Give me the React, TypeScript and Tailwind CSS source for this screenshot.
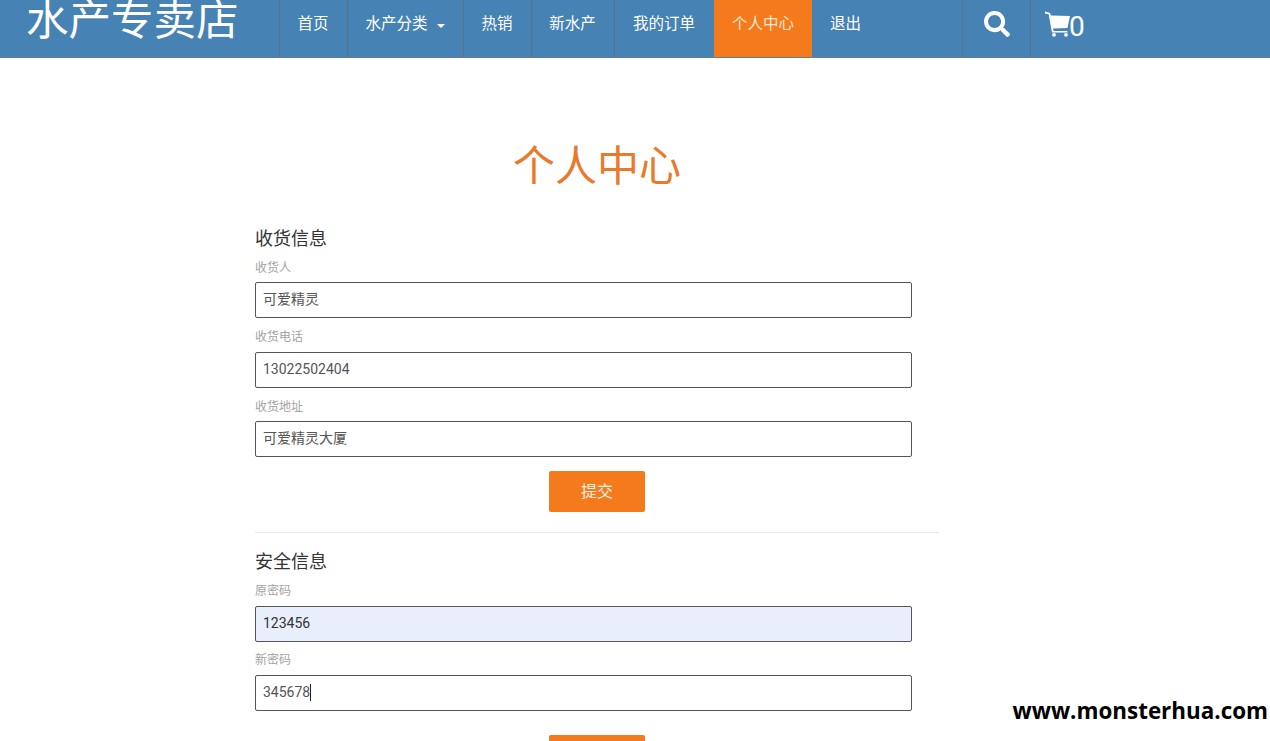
import React from "react";
import { FaSearch } from "react-icons/fa";

const cjk = "font-['Roboto','Noto_Sans_CJK_SC',sans-serif]";

function NavItem({ label, w, active, caret, plain }: { label: string; w: string; active?: boolean; caret?: boolean; plain?: boolean }) {
  const tone = active
    ? "bg-[#f47a1c] text-[#fbe6d0] justify-center"
    : plain
      ? "text-white pl-[18px]"
      : "text-white border-l border-[#5a7186] justify-center pr-[1px]";
  return (
    <div className={`${w} h-full flex items-center text-[15.5px] pb-[8px] ${tone}`}>
      <span>{label}</span>
      {caret && <span className="ml-[9px] mt-[2px] w-0 h-0 border-x-[4px] border-x-transparent border-t-[4px] border-t-white" />}
    </div>
  );
}

function Field({ label, value, className, gap, filled, caret, han }: { label: string; value: string; className: string; gap: string; filled?: boolean; caret?: boolean; han?: boolean }) {
  return (
    <div className={className}>
      <div className="text-[12px] leading-[17px] text-[#a3a3a3]">{label}</div>
      <div className={`${gap} w-[657px] h-[36px] border border-[#555] rounded-[2px] flex items-center pl-[7px] text-[14px] ${han ? "pb-[1px]" : "pb-[2px]"} ${filled ? "bg-[#e8eefb] text-[#333]" : "bg-white text-[#555]"}`}>
        <span>{value}</span>
        {caret && <span className="w-px h-[17px] bg-[#222]" />}
      </div>
    </div>
  );
}

function Submit({ className, label }: { className: string; label?: string }) {
  return (
    <div className={`w-[657px] flex pl-[294px] ${className}`}>
      <div className="w-[96px] h-[41px] shrink-0 bg-[#f47a1c] rounded-[2px] flex items-center justify-center text-[16px] text-[#fdf0e0]">{label}</div>
    </div>
  );
}

export default function App() {
  return (
    <div className={`${cjk} relative w-[1270px] h-[741px] overflow-hidden bg-white`}>
      <header className="h-[58px] bg-[#4682b4] border-b border-[#5f7f94] flex">
        <div className="w-[279px] pl-[26px] text-[42.5px] leading-[42px] text-white">水产专卖店</div>
        <NavItem label="首页" w="w-[68px]" />
        <NavItem label="水产分类" w="w-[116px]" caret />
        <NavItem label="热销" w="w-[68px]" />
        <NavItem label="新水产" w="w-[83px]" />
        <NavItem label="我的订单" w="w-[100px]" />
        <NavItem label="个人中心" w="w-[98px]" active />
        <NavItem label="退出" w="w-[150px]" plain />
        <div className="w-[68px] h-full border-l border-[#5a7186] flex items-center justify-center pb-[9px] text-white">
          <FaSearch size={26} />
        </div>
        <div className="border-l border-[#5a7186] h-full pl-[14px] flex items-start pt-[11px] text-white">
          <svg width="26" height="26" viewBox="0 0 26 26" fill="currentColor" aria-hidden="true">
            <path d="M0 0.5 L5 2 L6 4.5 L25 5 L22.5 17 L8 17.6 L8.6 20 L22.5 20 L22.5 21.6 L7 21.6 L3.6 3.2 L0 2.4 Z" />
            <circle cx="9" cy="23.8" r="1.9" />
            <circle cx="21" cy="23.8" r="1.9" />
          </svg>
          <span className="text-[28px] leading-[32px] -ml-[2px]">0</span>
        </div>
      </header>

      <main className="pl-[255px]">
        <h1 className="w-[684px] text-center text-[42px] leading-[60px] mt-[79px] text-[#e87a2a]">个人中心</h1>
        <h2 className="text-[18px] leading-[26px] text-[#333] mt-[29px]">收货信息</h2>
        <Field label="收货人" value="可爱精灵" className="mt-[8px]" gap="mt-[5px]" han />
        <Field label="收货电话" value="13022502404" className="mt-[11px]" gap="mt-[6px]" />
        <Field label="收货地址" value="可爱精灵大厦" className="mt-[11px]" gap="mt-[5px]" han />
        <Submit className="mt-[14px]" label="提交" />
        <div className="w-[684px] h-px bg-[#e8e8e8] mt-[20px]" />
        <h2 className="text-[18px] leading-[26px] text-[#333] mt-[16px]">安全信息</h2>
        <Field label="原密码" value="123456" className="mt-[8px]" gap="mt-[6px]" filled />
        <Field label="新密码" value="345678" className="mt-[10px]" gap="mt-[6px]" caret />
        <Submit className="mt-[24px]" />
      </main>

      <div className="absolute right-0 bottom-[15px] bg-white pl-[10px] pr-[2px] font-['Open_Sans',sans-serif] font-bold text-[22.4px] leading-[30px] text-black">www.monsterhua.com</div>
    </div>
  );
}
